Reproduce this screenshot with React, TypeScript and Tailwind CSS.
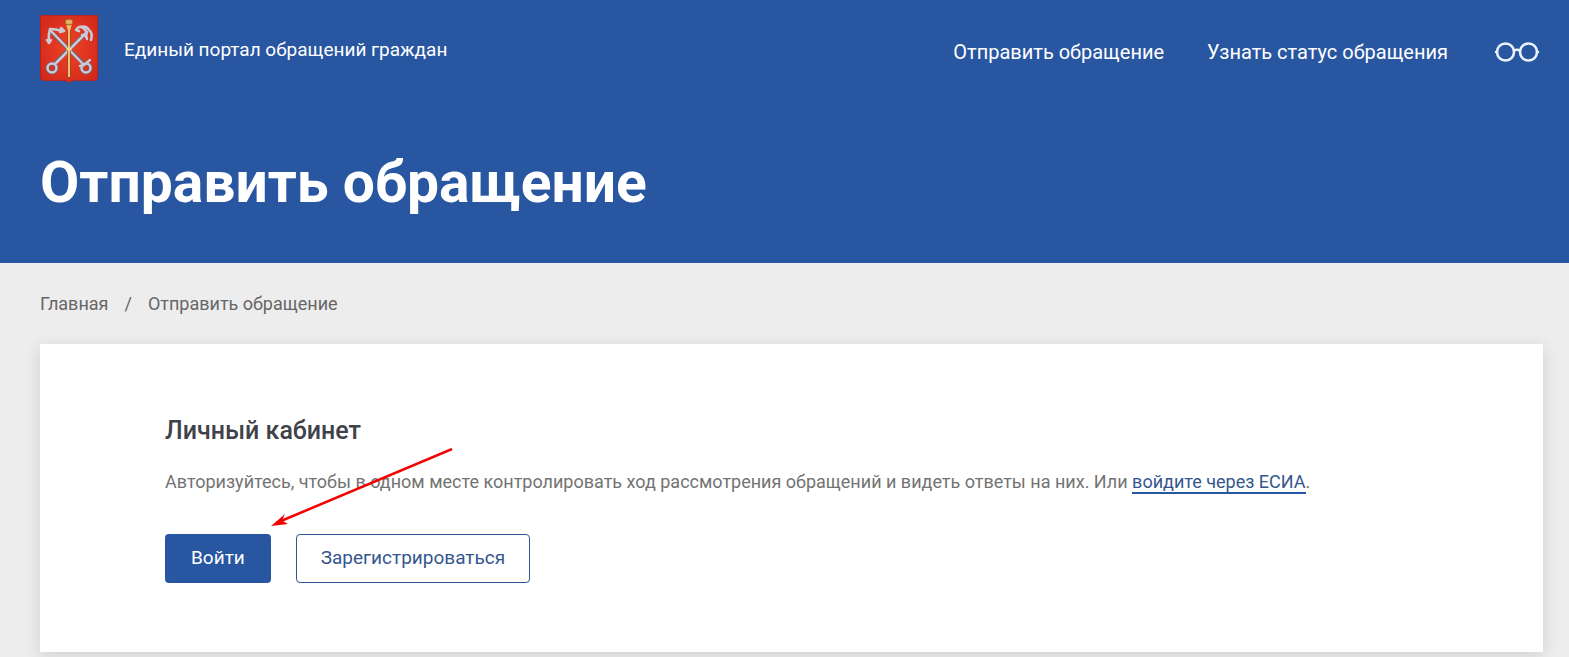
import React from "react";

const navLinks = ["Отправить обращение", "Узнать статус обращения"];

const Emblem = () => (
  <svg className="w-[58px] h-[70px]" viewBox="0 0 58 70" fill="none" aria-hidden="true">
    <defs>
      <radialGradient id="shield" cx="50%" cy="48%" r="60%">
        <stop offset="0" stopColor="#ee4226" />
        <stop offset="1" stopColor="#d42a1c" />
      </radialGradient>
    </defs>
    <path
      d="M0.5 0.5h57v62q0 3-3 3H34q-4 0-5 2.500-1-2.500-5-2.500H3.500q-3 0-3-3z"
      fill="url(#shield)"
      stroke="#b52222"
    />
    {/* sea anchor */}
    <g stroke="#74606c" strokeWidth="4" strokeLinecap="round">
      <path d="M12 18 43 48" />
      <path d="M46 18 15 48" />
      <circle cx="46" cy="53" r="4.500" />
      <circle cx="12" cy="53" r="4.500" />
    </g>
    <g stroke="#c9cad6" strokeWidth="2.500" strokeLinecap="round" strokeLinejoin="round">
      <path d="M10 15 43 49" />
      <path d="M9 27Q8 20 10 14q6 0 12 2M7 25l2 3 2-3M21 13l3 3-4 1" />
      <circle cx="46" cy="53" r="4.500" />
      <path d="M40 51l4-1 6-5" />
    </g>
    {/* river anchor */}
    <g stroke="#c9cad6" strokeWidth="2.500" strokeLinecap="round" strokeLinejoin="round">
      <path d="M47 17 15 49" />
      <path d="M36 15q3-5 7-2 5 3 3 9M40 12q6-2 9 3 4 3 2 10M36 15l3 1M42 20q5 0 5 4" />
      <circle cx="12" cy="53" r="4.500" />
    </g>
    {/* sceptre */}
    <path d="M29 11v52" stroke="#9c4a1c" strokeWidth="3.500" />
    <path d="M29 10v52" stroke="#efbf6b" strokeWidth="2" />
    <path d="M26 9h6l-2 7h-2z" fill="#efbf6b" />
    <ellipse cx="29" cy="7" rx="4" ry="3" fill="#e5b05c" stroke="#a75e24" />
    <path d="M26 34l3-3 3 3-3 3z" fill="#f7d58b" />
  </svg>
);

const Glasses = () => (
  <svg
    className="w-[46px] h-6"
    viewBox="0 0 46 24"
    fill="none"
    stroke="#eef4ff"
    strokeWidth="2.500"
    strokeLinecap="round"
    aria-hidden="true"
  >
    <circle cx="11.500" cy="12" r="8.500" />
    <circle cx="34.500" cy="12" r="8.500" />
    <path d="M20 10.500q3-1.500 6 0M2 12h1M43 12h1" />
  </svg>
);

const Arrow = () => (
  <svg
    className="absolute left-[106px] -top-[86px] w-[182px] h-[80px] pointer-events-none"
    viewBox="0 0 182 80"
    aria-hidden="true"
  >
    <path d="M181 1 10 73" stroke="#f40000" strokeWidth="2.500" fill="none" />
    <path d="M0 78 14 66 11 72.500 17 76z" fill="#f40000" />
  </svg>
);

const App = () => {
  return (
    <div className="min-h-screen bg-[#ededed] font-['Roboto',sans-serif]">
      <header className="h-[263px] bg-[#2856a1] text-white pl-10 pr-[29px]">
        <div className="flex items-center justify-between pt-[15px]">
          <a href="#" className="flex items-center gap-[26px] text-[19px]">
            <Emblem />
            <span>Единый портал обращений граждан</span>
          </a>
          <nav className="flex items-center gap-[43px] pt-[3px] text-xl">
            {navLinks.map((link) => (
              <a key={link} href="#">
                {link}
              </a>
            ))}
            <button type="button" aria-label="Версия для слабовидящих" className="pl-[3px]">
              <Glasses />
            </button>
          </nav>
        </div>
        <h1 className="mt-[62px] text-[57px] leading-[72px] font-bold">Отправить обращение</h1>
      </header>

      <main className="pl-10 pr-[26px]">
        <nav className="flex gap-4 py-[27px] text-lg leading-[27px] text-[#666]">
          <a href="#">Главная</a>
          <span>/</span>
          <span>Отправить обращение</span>
        </nav>

        <section className="bg-white px-[125px] pt-[69px] pb-[69px] shadow-[0_4px_16px_rgba(0,0,0,0.12)]">
          <h2 className="text-[25px] leading-9 font-medium text-[#40424a]">Личный кабинет</h2>
          <p className="mt-[19px] text-lg leading-[27px] text-[#737373]">
            Авторизуйтесь, чтобы в одном месте контролировать ход рассмотрения обращений и видеть
            ответы на них. Или{" "}
            <a href="#" className="border-b-2 border-[#2856a1] text-[#34568f]">
              войдите через ЕСИА
            </a>
            .
          </p>
          <div className="relative mt-[39px] flex gap-[25px]">
            <button
              type="button"
              className="h-[49px] px-[26px] rounded bg-[#2856a1] text-white text-[19px]"
            >
              Войти
            </button>
            <button
              type="button"
              className="h-[49px] px-6 rounded border border-[#34568f] text-[#34568f] text-[19px]"
            >
              Зарегистрироваться
            </button>
            <Arrow />
          </div>
        </section>
      </main>
    </div>
  );
};

export default App;
